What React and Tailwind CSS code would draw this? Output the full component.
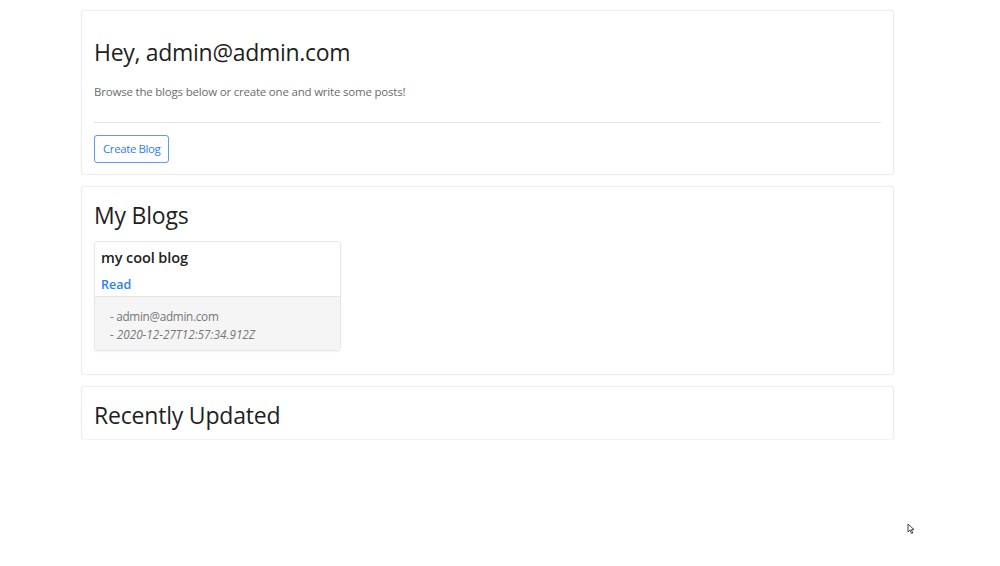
import React from 'react';

const Card = ({ className = '', children }) => (
  <div className={`border border-[#ececee] rounded-[3px] bg-white shadow-[0_0_2px_rgba(0,0,0,0.04)] ${className}`}>
    {children}
  </div>
);

const BlogCard = ({ title, author, date }) => (
  <div className="w-[247px] border border-[#e6e6e8] rounded-[3px] shadow-[0_1px_2px_rgba(0,0,0,0.06)]">
    <div className="px-[6px] pt-[5px] pb-[2px]">
      <h3 className="text-[14.5px] leading-[22px] font-semibold tracking-[-0.1px] text-[#222]">{title}</h3>
      <a href="#" className="block mt-[7px] text-[12.5px] leading-[18px] font-semibold text-[#2f80ed]">
        Read
      </a>
    </div>
    <div className="bg-[#f5f5f5] border-t border-[#e6e6e8] pl-[15px] pt-[10px] pb-[7px] text-[11.75px] leading-[18px] text-[#777]">
      <p className="tracking-[-0.3px]">- {author}</p>
      <p className="italic">- {date}</p>
    </div>
  </div>
);

export default function App() {
  return (
    <div className="relative h-[566px] bg-white font-['Open_Sans',sans-serif] text-[#222]">
      <div className="w-[813px] ml-[81px] pt-[10px] flex flex-col gap-[11px]">
        <Card className="px-[12px] pt-[27px] pb-[11px]">
          <h1 className="text-[23px] leading-[29px] tracking-[-0.3px] text-[#1f1f1f]">Hey, admin@admin.com</h1>
          <p className="mt-[16px] text-[11.5px] leading-[18px] tracking-[-0.2px] text-[#6c6c6c]">
            Browse the blogs below or create one and write some posts!
          </p>
          <hr className="mt-[21px] border-[#e4e4e6]" />
          <button className="mt-[12px] h-[28px] px-[8px] border border-[#5b9bf0] rounded-[3px] text-[11.5px] tracking-[-0.4px] text-[#2f80ed]">
            Create Blog
          </button>
        </Card>

        <Card className="px-[12px] pt-[13px] pb-[23px]">
          <h2 className="text-[23px] leading-[30px] tracking-[-0.2px] text-[#1f1f1f]">My Blogs</h2>
          <div className="mt-[11px]">
            <BlogCard title="my cool blog" author="admin@admin.com" date="2020-12-27T12:57:34.912Z" />
          </div>
        </Card>

        <Card className="px-[12px] pt-[13px] pb-[9px] border-b-[#f3f3f4]">
          <h2 className="text-[23px] leading-[30px] tracking-[-0.2px] text-[#1f1f1f]">Recently Updated</h2>
        </Card>
      </div>

      <svg className="absolute left-[907px] top-[523px]" width="8" height="12" viewBox="0 0 8 12">
        <path d="M1 1 L1 9 L3 7 L4.5 10.5 L5.8 10 L4.4 6.6 L7 6.6 Z" fill="#fff" stroke="#444" strokeWidth="1" strokeLinejoin="round" />
      </svg>
    </div>
  );
}
